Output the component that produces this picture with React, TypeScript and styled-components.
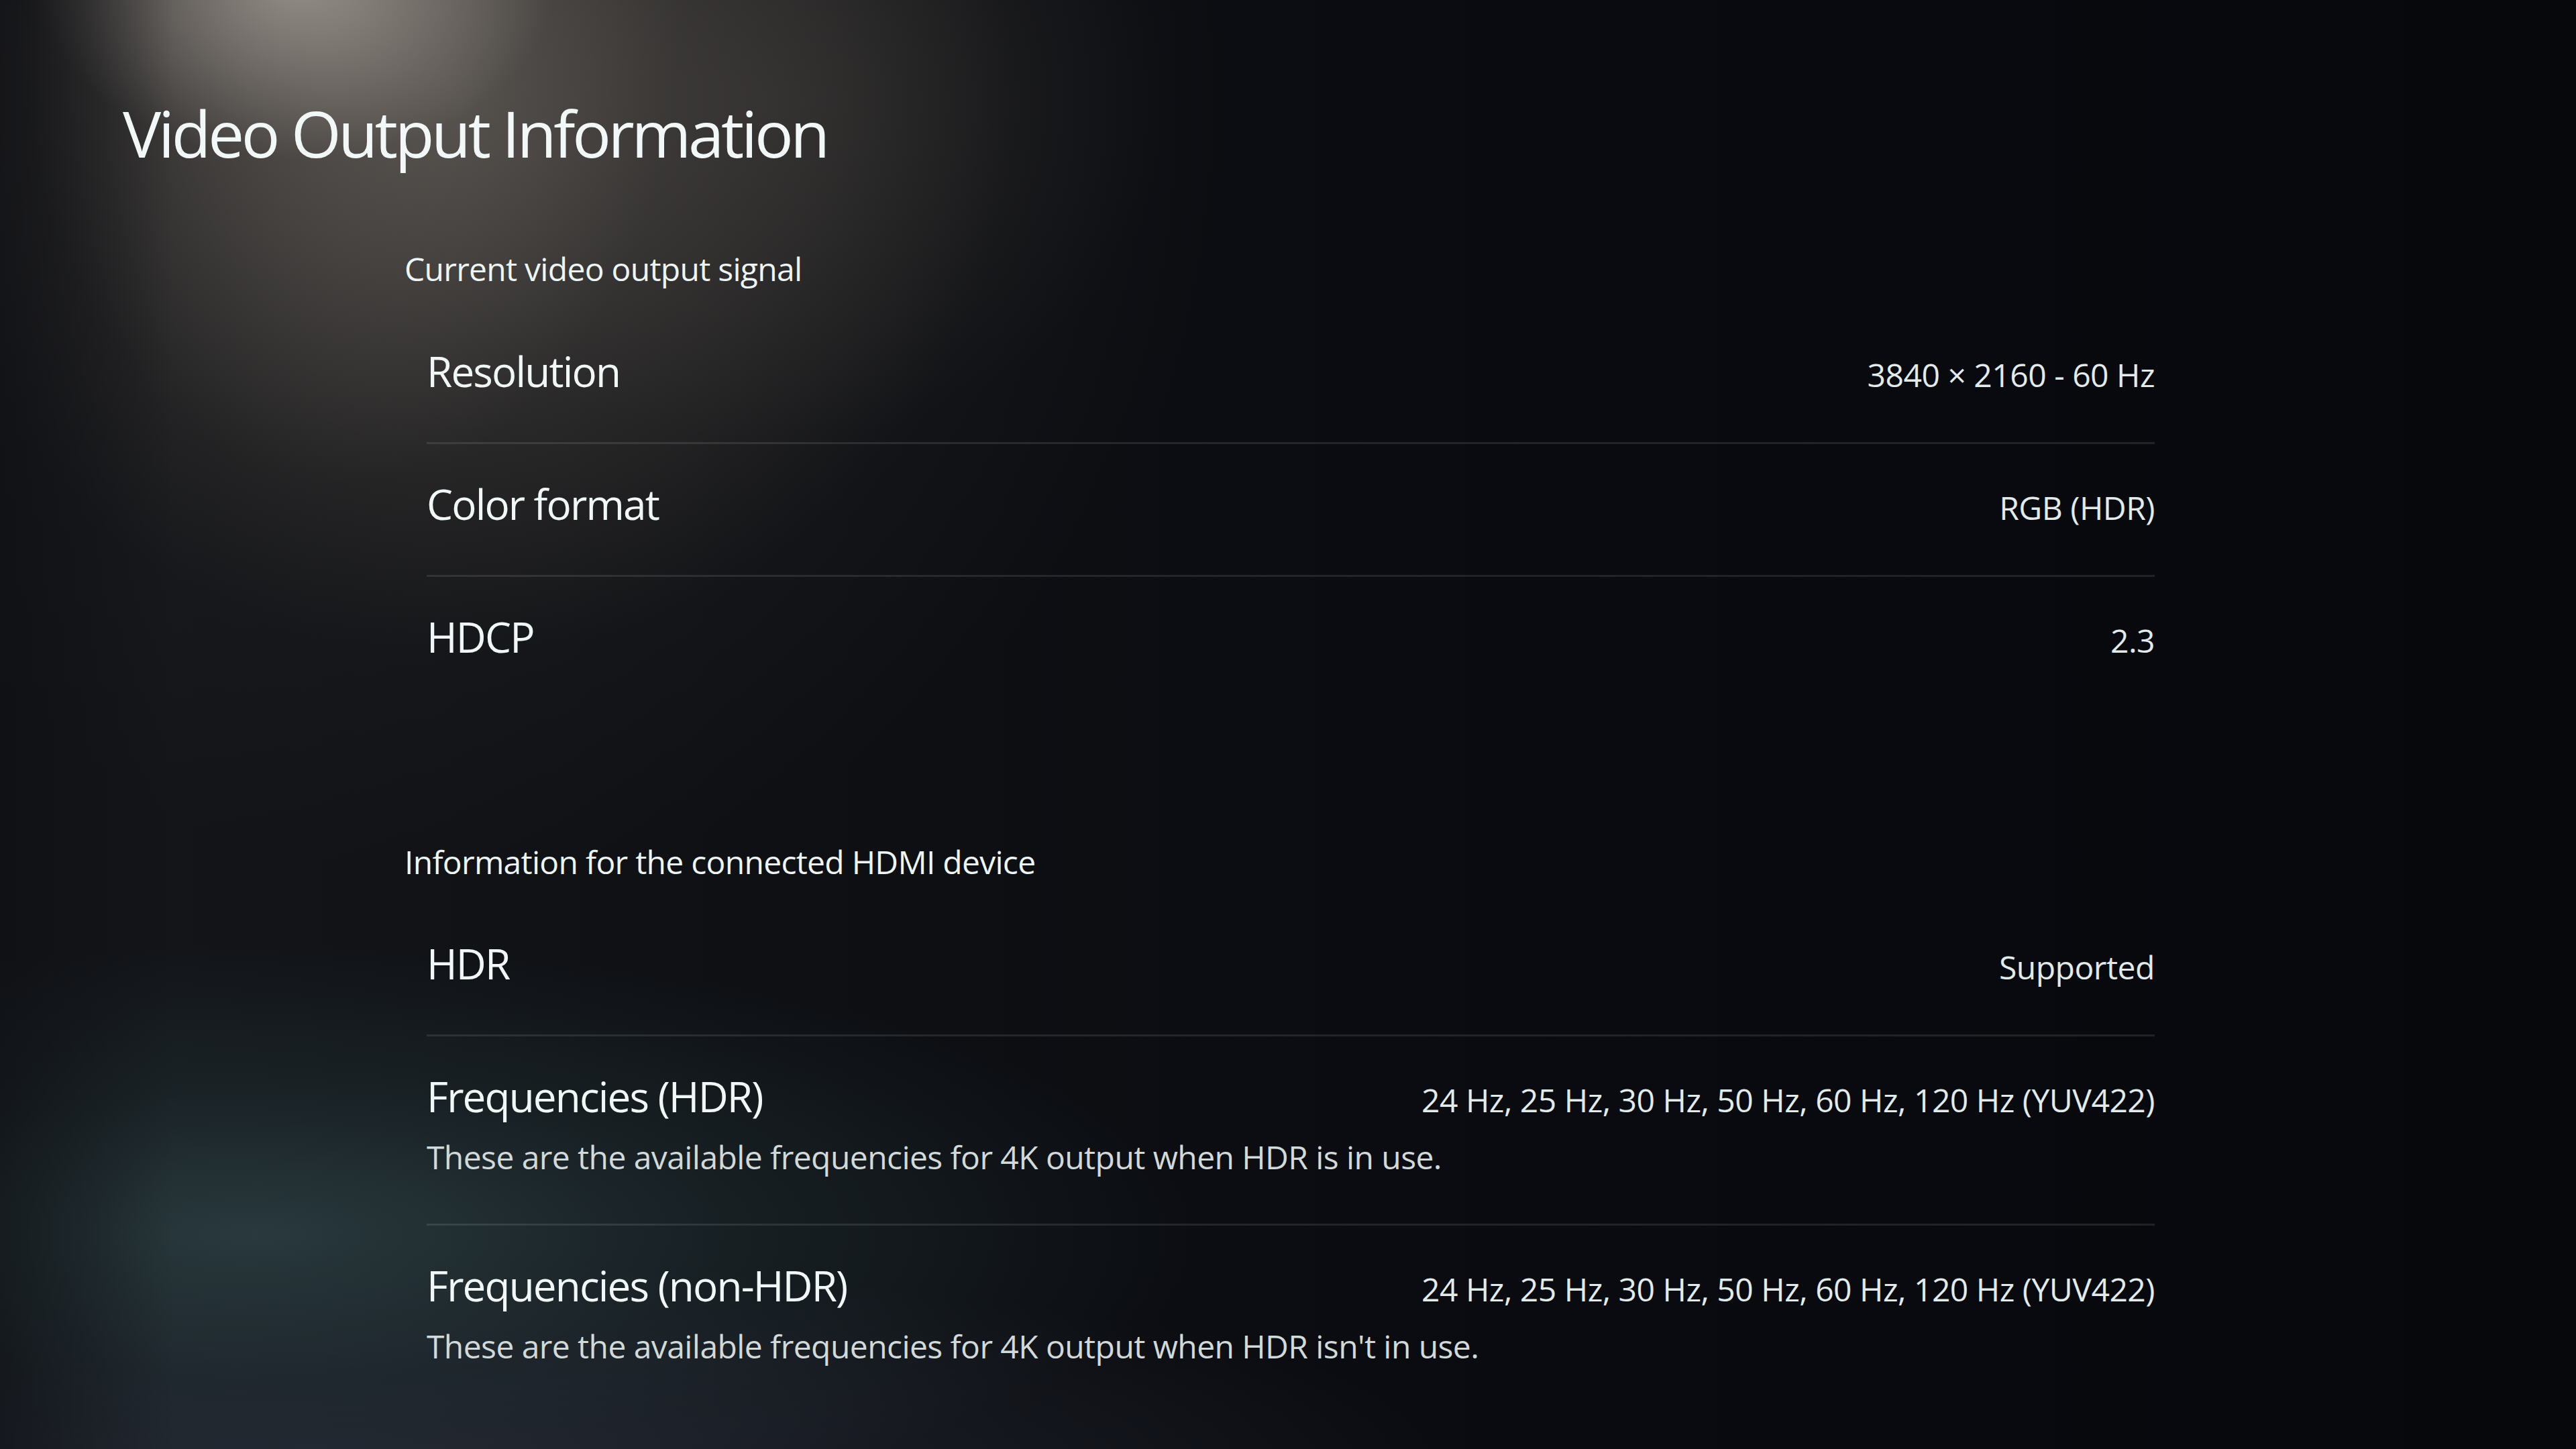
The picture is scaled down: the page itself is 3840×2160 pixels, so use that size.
import React from "react";
import styled, { createGlobalStyle } from "styled-components";

const GlobalStyle = createGlobalStyle`
  html, body {
    margin: 0;
    padding: 0;
    background: #07090d;
  }
  body {
    font-family: "Open Sans", "Noto Sans", sans-serif;
    -webkit-font-smoothing: antialiased;
  }
`;

const Page = styled.div`
  position: relative;
  width: 3840px;
  height: 2160px;
  overflow: hidden;
  box-sizing: border-box;
  padding: 140px 0 0 183px;
  color: #eef6f5;
  background:
    linear-gradient(to right, rgba(12, 13, 17, 0.55) 0px, rgba(12, 13, 17, 0) 260px),
    radial-gradient(ellipse 480px 320px at 440px -20px, rgba(190, 182, 174, 0.6), rgba(190, 182, 174, 0) 80%),
    radial-gradient(ellipse 620px 900px at 520px 0px, rgba(120, 113, 106, 0.45), rgba(120, 113, 106, 0) 80%),
    radial-gradient(ellipse 700px 600px at 1150px 150px, rgba(80, 75, 70, 0.3), rgba(80, 75, 70, 0) 85%),
    radial-gradient(ellipse 1150px 1150px at 680px 150px, rgba(92, 87, 82, 0.75) 0%, rgba(66, 62, 59, 0.55) 40%, rgba(40, 38, 37, 0.2) 72%, rgba(40, 38, 37, 0) 100%),
    radial-gradient(ellipse 1400px 430px at 380px 1840px, rgba(56, 82, 86, 0.6), rgba(40, 60, 64, 0.35) 50%, rgba(40, 60, 64, 0) 100%),
    radial-gradient(ellipse 1700px 320px at 500px 2200px, rgba(48, 50, 66, 0.6), rgba(48, 50, 66, 0) 100%),
    linear-gradient(to right, #14161a 0%, #0e1014 30%, #090b10 60%, #06080c 100%);
`;

const Title = styled.h1`
  margin: 0;
  font-size: 96px;
  line-height: 1.2;
  font-weight: 400;
  letter-spacing: -0.045em;
  color: #f2f8f7;
`;

const Content = styled.div`
  display: flex;
  flex-direction: column;
  width: 3029px;
  padding-left: 420px;
  box-sizing: border-box;
`;

const Section = styled.section<{ $gap: number }>`
  display: flex;
  flex-direction: column;
  margin-top: ${(p) => p.$gap}px;
`;

const SectionHeader = styled.h2`
  margin: 0;
  font-size: 48px;
  line-height: 1.2;
  font-weight: 400;
  letter-spacing: -0.015em;
  color: #eef6f5;
`;

const List = styled.div`
  display: flex;
  flex-direction: column;
  margin: 34px 0 0 33px;
`;

const Row = styled.div<{ $divider: boolean }>`
  display: flex;
  flex-direction: column;
  padding: 53px 0 70px;
  border-bottom: 3px solid ${(p) => (p.$divider ? "rgba(255, 255, 255, 0.1)" : "transparent")};
`;

const RowMain = styled.div`
  display: flex;
  align-items: baseline;
  justify-content: space-between;
  gap: 40px;
  height: 72px;
`;

const Label = styled.span`
  font-size: 62px;
  line-height: 72px;
  letter-spacing: -0.03em;
  color: #f0f7f6;
  white-space: nowrap;
`;

const Value = styled.span`
  font-size: 48px;
  line-height: 48px;
  letter-spacing: -0.01em;
  color: #e2eaea;
  white-space: nowrap;
`;

const Description = styled.div`
  margin-top: 26px;
  font-size: 48px;
  line-height: 1.2;
  letter-spacing: -0.012em;
  color: #d2d9d9;
`;

type Item = { label: string; value: string; desc?: string };

const sections: { header: string; gap: number; items: Item[] }[] = [
  {
    header: "Current video output signal",
    gap: 117,
    items: [
      { label: "Resolution", value: "3840 × 2160 - 60 Hz" },
      { label: "Color format", value: "RGB (HDR)" },
      { label: "HDCP", value: "2.3" },
    ],
  },
  {
    header: "Information for the connected HDMI device",
    gap: 198,
    items: [
      { label: "HDR", value: "Supported" },
      {
        label: "Frequencies (HDR)",
        value: "24 Hz, 25 Hz, 30 Hz, 50 Hz, 60 Hz, 120 Hz (YUV422)",
        desc: "These are the available frequencies for 4K output when HDR is in use.",
      },
      {
        label: "Frequencies (non-HDR)",
        value: "24 Hz, 25 Hz, 30 Hz, 50 Hz, 60 Hz, 120 Hz (YUV422)",
        desc: "These are the available frequencies for 4K output when HDR isn't in use.",
      },
    ],
  },
];

export default function App() {
  return (
    <>
      <GlobalStyle />
      <Page>
        <Title>Video Output Information</Title>
        <Content>
          {sections.map((s) => (
            <Section key={s.header} $gap={s.gap}>
              <SectionHeader>{s.header}</SectionHeader>
              <List>
                {s.items.map((it, i) => (
                  <Row key={it.label} $divider={i < s.items.length - 1}>
                    <RowMain>
                      <Label>{it.label}</Label>
                      <Value>{it.value}</Value>
                    </RowMain>
                    {it.desc && <Description>{it.desc}</Description>}
                  </Row>
                ))}
              </List>
            </Section>
          ))}
        </Content>
      </Page>
    </>
  );
}
